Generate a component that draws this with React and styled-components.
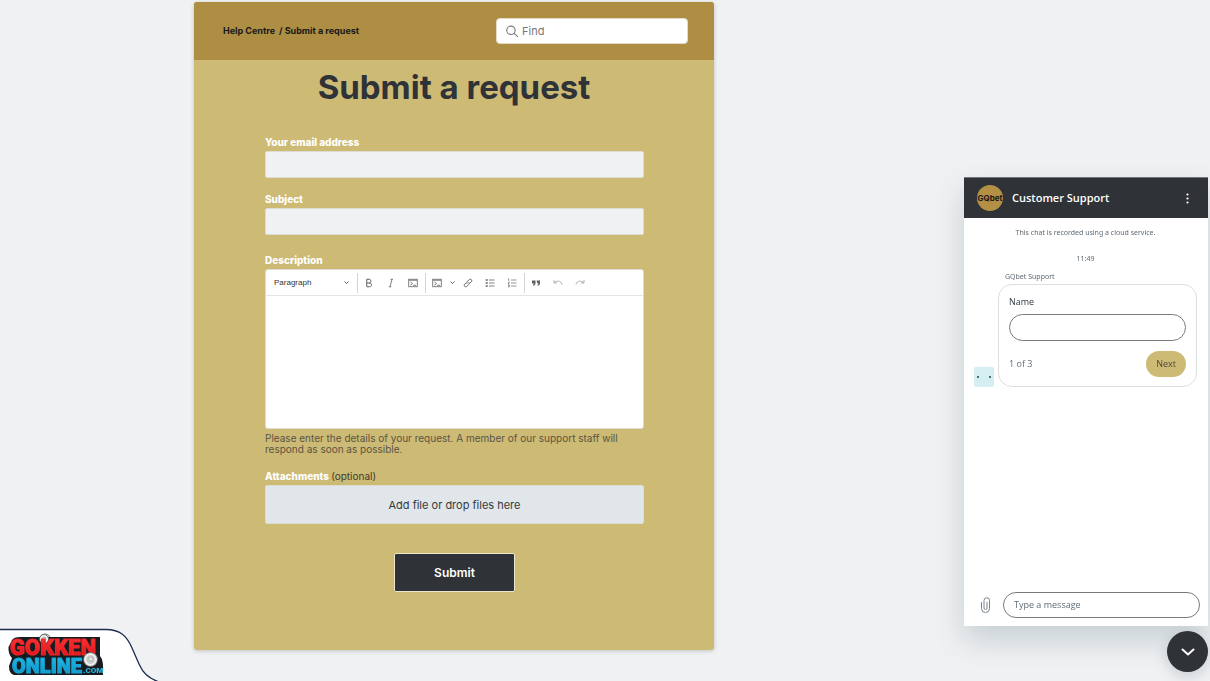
import React from "react";
import styled, { createGlobalStyle } from "styled-components";

const GlobalStyle = createGlobalStyle`
  *, *::before, *::after { box-sizing: border-box; }
  body {
    margin: 0;
    background: #f0f1f3;
    color: #2f3237;
    font-family: Inter, "Open Sans", sans-serif;
  }
  button, input, textarea, select { font: inherit; color: inherit; margin: 0; }
  button { padding: 0; border: 0; background: none; cursor: pointer; }
`;

const Page = styled.div`
  display: grid;
  grid-template-columns: minmax(0, 194fr) minmax(0, 520fr) minmax(0, 496fr);
  padding: 2px 0 31px;
`;

const Panel = styled.main`
  grid-column: 2;
  background: #cdba75;
  border-radius: 3px;
  box-shadow: 0 1px 4px rgba(0, 0, 0, 0.2);
  overflow: hidden;
`;

const PanelHeader = styled.header`
  display: flex;
  align-items: center;
  justify-content: space-between;
  height: 58px;
  padding: 0 26px 0 29px;
  background: #ae8e43;
`;

const Breadcrumbs = styled.nav`
  display: flex;
  gap: 4px;
  font-size: 9px;
  line-height: 12px;
  font-weight: 700;
  color: #17181a;

  a { color: inherit; text-decoration: none; }
`;

const SearchBox = styled.label`
  display: flex;
  align-items: center;
  gap: 3px;
  flex: 0 1 192px;
  min-width: 0;
  height: 26px;
  padding: 0 8px;
  background: #fff;
  border: 1px solid #e2dcc9;
  border-radius: 4px;
  color: #777;

  svg { flex: none; }
  input {
    flex: 1;
    width: 0;
    min-width: 0;
    padding: 0;
    border: 0;
    outline: 0;
    background: transparent;
    font-size: 11px;
    line-height: 16px;
  }
  input::placeholder { color: #777; opacity: 1; }
`;

const Title = styled.h1`
  margin: 0 0 20px;
  font-size: 33px;
  line-height: 54px;
  font-weight: 700;
  text-align: center;
`;

const Form = styled.form`
  display: flex;
  flex-direction: column;
  padding: 0 70px 58px 71px;
`;

const Field = styled.div`
  display: flex;
  flex-direction: column;
  margin-bottom: ${(p) => p.$gap}px;
`;

const Label = styled.label`
  font-size: 10px;
  line-height: 17px;
  font-weight: 800;
  color: #fff;
`;

const Optional = styled.span`
  font-weight: 400;
  color: #3c3a30;
`;

const TextInput = styled.input`
  height: 27px;
  padding: 0 8px;
  background: #f0f1f3;
  border: 1px solid #dddcd2;
  border-radius: 2px;
  font-size: 10px;
`;

const Editor = styled.div`
  height: 160px;
  display: flex;
  flex-direction: column;
  background: #fff;
  border: 1px solid #dcdcd4;
  border-radius: 3px;
  overflow: hidden;
`;

const Toolbar = styled.div`
  display: flex;
  align-items: center;
  height: 26px;
  border-bottom: 1px solid #e4e4e4;
  color: #5d6164;
`;

const StylePicker = styled.div`
  display: flex;
  align-items: center;
  width: 90px;
  padding: 0 7px 0 8px;

  select {
    flex: 1;
    min-width: 0;
    padding: 0;
    border: 0;
    background: transparent;
    appearance: none;
    font-family: "Liberation Sans", Arial, sans-serif;
    font-size: 8px;
    line-height: 12px;
    color: #333;
  }
`;

const Divider = styled.span`
  width: 1px;
  height: 20px;
  margin-left: 1px;
  background: #d4d4d4;
`;

const ToolButton = styled.button`
  display: flex;
  align-items: center;
  justify-content: center;
  width: ${(p) => (p.$narrow ? 9 : 22)}px;
  height: 22px;
  opacity: ${(p) => (p.$faded ? 0.6 : 1)};
`;

const EditorArea = styled.textarea`
  flex: 1;
  padding: 8px;
  border: 0;
  outline: 0;
  resize: none;
  font-size: 10px;
`;

const Hint = styled.p`
  margin: 4px 0 0;
  font-size: 10px;
  line-height: 11px;
  color: #5a5544;
`;

const DropZone = styled.label`
  display: flex;
  align-items: center;
  justify-content: center;
  height: 39px;
  background: #e0e6e9;
  border: 1px solid #dcdcd0;
  border-radius: 2px;
  font-size: 11px;
  line-height: 16px;
  color: #35393d;
  cursor: pointer;

  input { display: none; }
`;

const SubmitButton = styled.button`
  align-self: center;
  width: 32%;
  height: 39px;
  background: #2f3236;
  border: 1px solid #ece6cf;
  border-radius: 2px;
  color: #fff;
  font-size: 12px;
  line-height: 16px;
  font-weight: 600;
`;

const Chat = styled.section`
  position: fixed;
  right: 2px;
  bottom: 55px;
  width: 244px;
  display: flex;
  flex-direction: column;
  background: #fff;
  box-shadow: 0 14px 28px rgba(36, 74, 84, 0.2);
  font-family: "Open Sans", "Noto Sans", sans-serif;
`;

const ChatHeader = styled.header`
  display: flex;
  align-items: center;
  gap: 9px;
  height: 41px;
  padding: 0 11px 0 13px;
  border-top: 1px solid #74777a;
  background: #2f3236;
  color: #fff;

  h2 {
    flex: 1;
    margin: 0;
    font-size: 11px;
    line-height: 16px;
    font-weight: 600;
  }
`;

const BrandAvatar = styled.span`
  display: flex;
  align-items: center;
  justify-content: center;
  width: 26px;
  height: 26px;
  border-radius: 50%;
  background: #b49044;
  color: #17181a;
  font-family: Inter, sans-serif;
  font-size: 8px;
  line-height: 12px;
  font-weight: 700;
`;

const IconButton = styled.button`
  display: flex;
  align-items: center;
  justify-content: center;
  width: 20px;
  height: 20px;
  color: ${(p) => p.$color};
`;

const ChatLog = styled.div`
  display: flex;
  flex-direction: column;
  min-height: 366px;
  padding: 9px 11px 0 10px;
`;

const Notice = styled.p`
  margin: 0 0 ${(p) => p.$gap}px;
  font-family: "Noto Sans", "Open Sans", sans-serif;
  font-size: 7px;
  line-height: 12px;
  text-align: center;
  color: #5f6b75;
`;

const Sender = styled.p`
  margin: 0 0 1px 31px;
  font-family: "Noto Sans", "Open Sans", sans-serif;
  font-size: 7px;
  line-height: 12px;
  color: #5f6b75;
`;

const MessageRow = styled.div`
  display: flex;
  align-items: flex-end;
  gap: 4px;
`;

const BotAvatar = styled.span`
  display: flex;
  align-items: center;
  justify-content: space-between;
  width: 20px;
  height: 20px;
  padding: 0 3px;
  border-radius: 2px;
  background: #d5eef2;

  &::before, &::after {
    content: "";
    width: 2px;
    height: 2px;
    border-radius: 50%;
    background: #17494d;
  }
`;

const Card = styled.form`
  flex: 1;
  min-width: 0;
  display: flex;
  flex-direction: column;
  padding: 9px 10px;
  border: 1px solid #dcdee0;
  border-radius: 14px;

  label {
    margin-bottom: 4px;
    font-size: 9px;
    line-height: 16px;
    color: #2f3941;
  }
`;

const PillInput = styled.input`
  flex: 1 1 auto;
  width: 100%;
  min-width: 0;
  min-height: ${(p) => p.$height}px;
  padding: 0 10px;
  background: #fff;
  border: 1px solid #77797c;
  border-radius: 14px;
  font-size: 9px;
  line-height: 16px;

  &::placeholder { color: #5f6b75; opacity: 1; }
`;

const CardFooter = styled.div`
  display: flex;
  align-items: center;
  justify-content: space-between;
  margin-top: 10px;
  font-size: 9px;
  line-height: 16px;
  color: #5f6b75;
`;

const NextButton = styled.button`
  width: 40px;
  height: 26px;
  border-radius: 13px;
  background: #cdba75;
  color: #4d4935;
`;

const Composer = styled.div`
  display: flex;
  align-items: center;
  gap: 8px;
  padding: 8px 8px 8px 11px;

  button { flex: none; }
`;

const Launcher = styled.button`
  position: fixed;
  right: 2px;
  bottom: 9px;
  width: 41px;
  height: 41px;
  display: flex;
  align-items: center;
  justify-content: center;
  border-radius: 50%;
  background: #2f3236;
  color: #fff;
  box-shadow: 0 4px 14px rgba(36, 74, 84, 0.2);
`;

const SiteBadge = styled.a`
  position: fixed;
  left: 0;
  bottom: 0;
  line-height: 0;
`;

const Svg = ({ size = 10, box = 20, children, width = 1.6 }) => (
  <svg width={size} height={size} viewBox={`0 0 ${box} ${box}`} fill="none" stroke="currentColor" strokeWidth={width} aria-hidden="true">
    {children}
  </svg>
);

const Caret = () => (
  <Svg size={5} box={10} width={2}>
    <path d="M1 3l4 4 4-4" />
  </Svg>
);

const BlockIcon = () => (
  <Svg>
    <rect x="1.5" y="2.5" width="17" height="15" />
    <path d="M2 4.500h16M5 8l4 3-4 3M10 14.500h6" />
  </Svg>
);

const icons = {
  bold: (
    <Svg>
      <path d="M5.500 2.500v15h5.500c5.500 0 5.500-7.500 0-7.500H5.500M5.500 2.500H10c5 0 5 7.500 0 7.500" strokeWidth="2" />
    </Svg>
  ),
  italic: (
    <Svg>
      <path d="M9 2.500h5M5.500 17.500h5M12 2.500l-4 15" />
    </Svg>
  ),
  link: (
    <Svg width={2}>
      <path d="M8.500 11.500c-1.800-1.800-1-3.400.2-4.600l3.600-3.600c3-2.600 7 1 4.400 4.200l-3 3M11.500 8.500c1.800 1.800 1 3.400-.2 4.600l-3.600 3.600c-3 2.600-7-1-4.400-4.200l3-3" />
    </Svg>
  ),
  bullets: (
    <Svg>
      <path d="M8 4h11M8 10h11M8 16h11" />
      <path d="M1.500 4h4M1.500 10h4M1.500 16h4" strokeWidth="3" />
    </Svg>
  ),
  numbers: (
    <Svg width={1.300}>
      <path d="M8 4h11M8 10h11M8 16h11M2 2l1.500-.5V6M2 8.500h2.500L2 12h3M2 14h2.500v4H2M3 16h1.500" />
    </Svg>
  ),
  quote: (
    <Svg>
      <path d="M2 5h7v5.500c0 3-2 4.500-5 5v-2c1.500-.5 2-1.500 2-2.500H2zM11 5h7v5.500c0 3-2 4.500-5 5v-2c1.500-.5 2-1.500 2-2.500h-2z" fill="currentColor" stroke="none" />
    </Svg>
  ),
  undo: (
    <Svg>
      <path d="M2 4v6h6M2.500 9.500C6 5.500 16 4 18 13" />
    </Svg>
  ),
  redo: (
    <Svg>
      <path d="M18 4v6h-6M17.500 9.500C14 5.500 4 4 2 13" />
    </Svg>
  ),
};

const Tool = ({ name, icon, faded }) => (
  <ToolButton type="button" aria-label={name} $faded={faded}>
    {icon}
  </ToolButton>
);

const Coin = ({ x, y, r }) => (
  <g stroke="#55575a" strokeWidth="0.8">
    <circle cx={x} cy={y} r={r} fill="#e6e6e6" />
    <circle cx={x} cy={y} r={r * 0.7} fill="#c9cacb" stroke="#fff" />
    <path d={`M${x - r * 0.35} ${y - r * 0.2}l${r * 0.7} ${-r * 0.15}l${-r * 0.2} ${r * 0.7}z`} fill="#eee" stroke="#999" strokeWidth="0.5" />
  </g>
);

const SiteLogo = () => (
  <svg width="160" height="53" viewBox="0 0 160 53" role="img" aria-label="Gokken Online .com">
    <defs>
      <linearGradient id="red" x1="0" y1="0" x2="0" y2="1">
        <stop offset="0" stopColor="#ff3a35" />
        <stop offset="1" stopColor="#d90d16" />
      </linearGradient>
      <linearGradient id="blue" x1="0" y1="0" x2="0" y2="1">
        <stop offset="0" stopColor="#25bfe8" />
        <stop offset="1" stopColor="#078fc4" />
      </linearGradient>
    </defs>
    <path d="M-2 1.500H106C120 1.500 127 8 132 20L139 36C143 45 148 50 158 53.500V55H-2z" fill="#fff" stroke="#1f2b50" strokeWidth="1.300" />
    <Coin x={45} y={12} r={6} />
    <path d="M12 12Q14 9 20 9H100V28Q104 32 103 47H14Q9 46 9 38L12 30Q8 26 8.500 19z" fill="#181b20" />
    <Coin x={44} y={11} r={4.500} />
    <g fontFamily="Roboto, sans-serif" fontWeight="900" strokeLinejoin="round">
      <text x="10" y="27" fontSize="22" strokeWidth="1" stroke="#f0262a" fill="url(#red)">GOKKEN</text>
      <text x="12" y="45" fontSize="20" strokeWidth="1" stroke="#16a5d6" fill="url(#blue)">ONLINE</text>
      <text x="83" y="45" fontSize="8" fill="#22b8e4">.COM</text>
    </g>
    <Coin x={90.500} y={31.500} r={7} />
  </svg>
);

export default function App() {
  return (
    <>
      <GlobalStyle />
      <Page>
        <Panel>
          <PanelHeader>
            <Breadcrumbs aria-label="Breadcrumb">
              <a href="#help">Help Centre</a>
              <span>/ Submit a request</span>
            </Breadcrumbs>
            <SearchBox>
              <Svg size={14} width={1.600}>
                <circle cx="8.500" cy="9" r="6" />
                <path d="M13 13.500l5.500 5" />
              </Svg>
              <input type="search" placeholder="Find" aria-label="Find" />
            </SearchBox>
          </PanelHeader>
          <Title>Submit a request</Title>
          <Form>
            <Field $gap={13}>
              <Label htmlFor="email">Your email address</Label>
              <TextInput id="email" type="email" />
            </Field>
            <Field $gap={17}>
              <Label htmlFor="subject">Subject</Label>
              <TextInput id="subject" type="text" />
            </Field>
            <Field $gap={13}>
              <Label htmlFor="description">Description</Label>
              <Editor>
                <Toolbar>
                  <StylePicker>
                    <select aria-label="Text style">
                      <option>Paragraph</option>
                    </select>
                    <Caret />
                  </StylePicker>
                  <Divider />
                  <Tool name="Bold" icon={icons.bold} />
                  <Tool name="Italic" icon={icons.italic} />
                  <Tool name="Code" icon={<BlockIcon />} />
                  <Divider />
                  <Tool name="Code block" icon={<BlockIcon />} />
                  <ToolButton type="button" aria-label="Code block options" $narrow>
                    <Caret />
                  </ToolButton>
                  <Tool name="Link" icon={icons.link} />
                  <Tool name="Bulleted list" icon={icons.bullets} />
                  <Tool name="Numbered list" icon={icons.numbers} />
                  <Divider />
                  <Tool name="Quote" icon={icons.quote} />
                  <Tool name="Undo" icon={icons.undo} faded />
                  <Tool name="Redo" icon={icons.redo} faded />
                </Toolbar>
                <EditorArea id="description" />
              </Editor>
              <Hint>
                Please enter the details of your request. A member of our support staff will respond as soon as possible.
              </Hint>
            </Field>
            <Field $gap={29}>
              <Label htmlFor="files">
                Attachments <Optional>(optional)</Optional>
              </Label>
              <DropZone>
                Add file or drop files here
                <input id="files" type="file" multiple />
              </DropZone>
            </Field>
            <SubmitButton type="submit">Submit</SubmitButton>
          </Form>
        </Panel>
      </Page>

      <SiteBadge href="#home">
        <SiteLogo />
      </SiteBadge>

      <Chat aria-label="Customer Support">
        <ChatHeader>
          <BrandAvatar>GQbet</BrandAvatar>
          <h2>Customer Support</h2>
          <IconButton type="button" aria-label="Options" $color="#fff">
            <svg width="3" height="11" viewBox="0 0 3 11" fill="currentColor">
              <circle cx="1.500" cy="1.500" r="1.100" />
              <circle cx="1.500" cy="5.500" r="1.100" />
              <circle cx="1.500" cy="9.500" r="1.100" />
            </svg>
          </IconButton>
        </ChatHeader>
        <ChatLog>
          <Notice $gap={14}>This chat is recorded using a cloud service.</Notice>
          <Notice $gap={6}>11:49</Notice>
          <Sender>GQbet Support</Sender>
          <MessageRow>
            <BotAvatar />
            <Card>
              <label htmlFor="name">Name</label>
              <PillInput id="name" type="text" $height={27} />
              <CardFooter>
                <span>1 of 3</span>
                <NextButton type="button">Next</NextButton>
              </CardFooter>
            </Card>
          </MessageRow>
        </ChatLog>
        <Composer>
          <IconButton type="button" aria-label="Attach a file" $color="#77838d">
            <svg width="9" height="16" viewBox="0 0 9 16" fill="none" stroke="currentColor" strokeWidth="1">
              <path d="M.5 5v6.500a4 4 0 0 0 8 0V3.500a2.500 2.500 0 0 0-5.500 0V11a1.400 1.400 0 0 0 3 0V5" />
            </svg>
          </IconButton>
          <PillInput type="text" placeholder="Type a message" aria-label="Type a message" $height={26} />
        </Composer>
      </Chat>
      <Launcher type="button" aria-label="Close chat">
        <Svg size={16} box={16} width={2}>
          <path d="M2.500 5.500L8 10.500l5.500-5" strokeLinecap="round" />
        </Svg>
      </Launcher>
    </>
  );
}
